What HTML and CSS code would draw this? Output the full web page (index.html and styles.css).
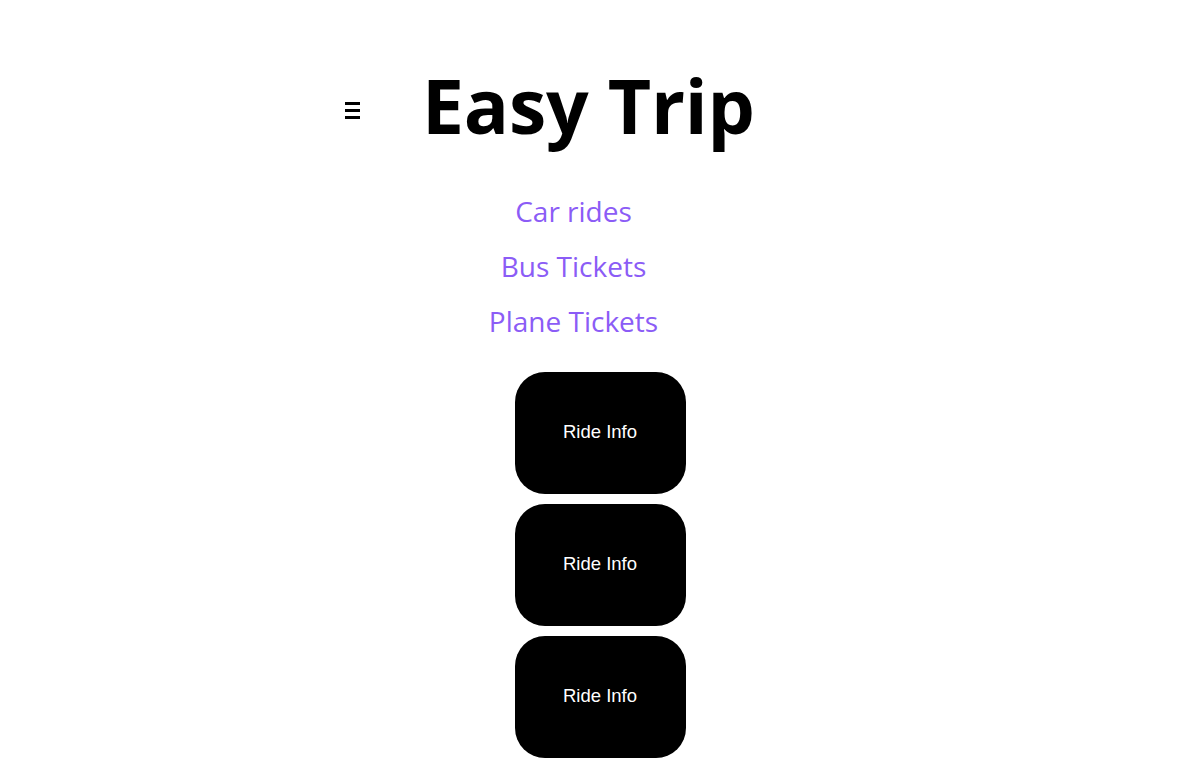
FILE: index.html
```html
<!DOCTYPE html>
<html lang="en">
<head>
<meta charset="utf-8">
<title>Easy Trip</title>
<link rel="stylesheet" href="styles.css">
</head>
<body>
<header class="header">
  <button class="menu" aria-label="Menu"><span></span><span></span><span></span></button>
  <h1 class="title">Easy Trip</h1>
</header>
<nav class="nav">
  <a href="#" class="nav-link">Car rides</a>
  <a href="#" class="nav-link">Bus Tickets</a>
  <a href="#" class="nav-link">Plane Tickets</a>
</nav>
<main class="rides">
  <div class="ride-card">Ride Info</div>
  <div class="ride-card">Ride Info</div>
  <div class="ride-card">Ride Info</div>
</main>
</body>
</html>
```
FILE: styles.css
```css
html, body {
  margin: 0;
  padding: 0;
  background: #ffffff;
}
body {
  font-family: "Open Sans", "Liberation Sans", sans-serif;
  width: 1200px;
  overflow: hidden;
}
.header {
  display: flex;
  align-items: center;
  padding: 54px 0 0 345px;
  height: 102px;
}
.menu {
  display: flex;
  flex-direction: column;
  gap: 4px;
  width: 16px;
  padding: 0;
  border: 0;
  background: none;
  margin-top: 10px;
}
.menu span {
  display: block;
  width: 15px;
  height: 3px;
  background: #000;
}
.title {
  margin: 0 0 0 61px;
  font-family: "Open Sans", sans-serif;
  font-weight: 700;
  font-size: 75px;
  line-height: 102px;
  color: #000;
  letter-spacing: -0.2px;
}
.nav {
  display: flex;
  flex-direction: column;
  align-items: center;
  padding: 28px 53px 0 0;
}
.nav-link {
  font-size: 28px;
  line-height: 55px;
  color: #8b5cf6;
  text-decoration: none;
}
.rides {
  display: flex;
  flex-direction: column;
  align-items: center;
  gap: 10px;
  padding: 23px 0 0 0;
}
.ride-card {
  width: 171px;
  height: 120px;
  padding-bottom: 2px;
  border-radius: 30px;
  background: #000;
  color: #fff;
  display: flex;
  align-items: center;
  justify-content: center;
  font-family: "Liberation Sans", Arial, sans-serif;
  font-size: 18.5px;
}
```
